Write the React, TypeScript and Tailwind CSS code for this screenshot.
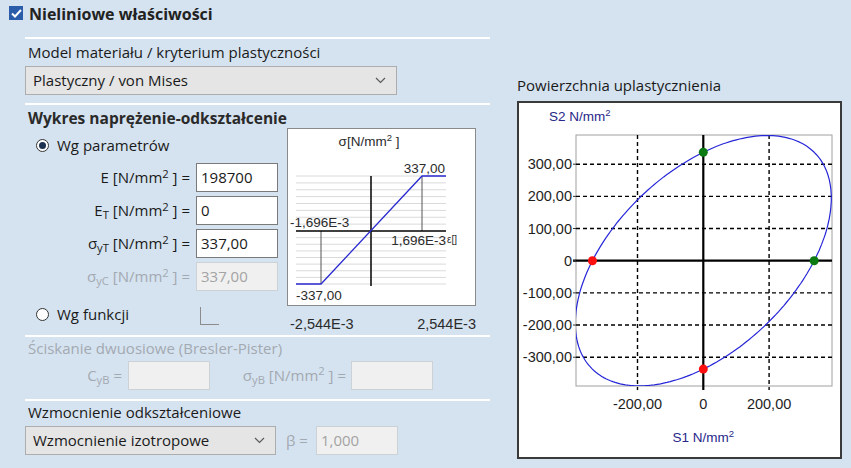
import React from "react";

// von Mises yield surface in the S1/S2 plane
const SY = 337;
const SEMI_A = SY * Math.SQRT2;
const SEMI_B = SY * Math.sqrt(2 / 3);

function Chevron() {
  return (
    <svg width="11" height="7" viewBox="0 0 11 7">
      <path d="M1 1l4.5 4.5L10 1" fill="none" stroke="#5a5a5a" strokeWidth="1.2" />
    </svg>
  );
}

function Field({ value = "", disabled = false }: { value?: string; disabled?: boolean }) {
  return (
    <div
      className={
        disabled
          ? "w-[82px] h-[29px] flex items-center px-[4px] border border-[#cdd2d7] bg-[#f0f0f0] text-[#a3a3a3]"
          : "w-[82px] h-[29px] flex items-center px-[4px] border border-[#7a7a7a] bg-white text-[#1a1a1a]"
      }
    >
      {value}
    </div>
  );
}

function Radio({ checked = false }: { checked?: boolean }) {
  return (
    <span className="w-[13px] h-[13px] rounded-full border border-[#333] bg-white flex items-center justify-center shrink-0">
      {checked && <span className="w-[7px] h-[7px] rounded-full bg-[#1c3050]" />}
    </span>
  );
}

function Separator() {
  return <div className="h-[2px] bg-white" />;
}

function StressChart() {
  const rows: number[] = [];
  for (let k = 0; k < 8; k++) {
    rows.push(47 + (k * 55) / 8);
    rows.push(102 + ((k + 1) * 53) / 8);
  }
  return (
    <svg width="187" height="176" className="block font-['Liberation_Sans',sans-serif]">
      {rows.map((y) => (
        <line key={y} x1="8" x2="158" y1={y} y2={y} stroke="#dadada" />
      ))}
      <line x1="33" x2="33" y1="102" y2="155" stroke="#555" />
      <line x1="134" x2="134" y1="47" y2="102" stroke="#555" />
      <line x1="8" x2="158" y1="102" y2="102" stroke="#000" strokeWidth="1.5" />
      <line x1="83" x2="83" y1="47" y2="157" stroke="#000" strokeWidth="1.5" />
      <polyline points="8,155 33,155 134,47 158,47" fill="none" stroke="#2a2ad0" strokeWidth="1.3" />
      <g fill="#2b2b2b" fontSize="13.5">
        <text x="81" y="17" textAnchor="middle">
          σ[N/mm<tspan dy="-5" fontSize="9.5">2</tspan>
          <tspan dy="5"> ]</tspan>
        </text>
        <text x="157" y="44" textAnchor="end">337,00</text>
        <text x="2" y="98">-1,696E-3</text>
        <text x="158" y="116" textAnchor="end">1,696E-3</text>
        <text x="159" y="114" fontSize="10">ε[]</text>
        <text x="8" y="171">-337,00</text>
      </g>
    </svg>
  );
}

function YieldChart() {
  const cx = 184.3;
  const cy = 157.7;
  const sx = 0.329;
  const sy = 0.3217;
  const px = (v: number) => cx + v * sx;
  const py = (v: number) => cy - v * sy;

  const d =
    Array.from({ length: 241 }, (_, i) => {
      const t = (i / 240) * 2 * Math.PI;
      const s1 = (SEMI_A * Math.cos(t) - SEMI_B * Math.sin(t)) / Math.SQRT2;
      const s2 = (SEMI_A * Math.cos(t) + SEMI_B * Math.sin(t)) / Math.SQRT2;
      return `${i ? "L" : "M"}${px(s1).toFixed(1)},${py(s2).toFixed(1)}`;
    }).join("") + "Z";

  const yTicks = [300, 200, 100, 0, -100, -200, -300];
  const fmt = (v: number) => (v === 0 ? "0" : `${v},00`);

  return (
    <svg width="321" height="354" className="block font-['Liberation_Sans',sans-serif]">
      <defs>
        <clipPath id="plot">
          <rect x="57" y="32" width="256" height="251" />
        </clipPath>
      </defs>
      <rect x="57" y="32" width="256" height="251" fill="#fff" stroke="#a0a0a0" />

      {yTicks
        .filter((v) => v !== 0)
        .map((v) => (
          <line key={v} x1="57" x2="313" y1={py(v)} y2={py(v)} stroke="#000" strokeWidth="1.4" strokeDasharray="4 3" />
        ))}
      {[-200, 200].map((v) => (
        <line key={v} x1={px(v)} x2={px(v)} y1="32" y2="287" stroke="#000" strokeWidth="1.4" strokeDasharray="4 3" />
      ))}
      <line x1="54" x2="313" y1={cy} y2={cy} stroke="#000" strokeWidth="2.2" />
      <line x1={cx} x2={cx} y1="32" y2="287" stroke="#000" strokeWidth="2.2" />

      {yTicks.map((v) => (
        <g key={v}>
          <line x1="54" x2="57" y1={py(v)} y2={py(v)} stroke="#333" />
          <text x="53" y={py(v) + 5} textAnchor="end" fontSize="14.5" fill="#1e1e1e">
            {fmt(v)}
          </text>
        </g>
      ))}
      {[-200, 0, 200].map((v) => (
        <text key={v} x={px(v)} y="306" textAnchor="middle" fontSize="14.5" fill="#1e1e1e">
          {fmt(v)}
        </text>
      ))}

      <path d={d} fill="none" stroke="#2626d8" strokeWidth="1.2" clipPath="url(#plot)" />

      <circle cx={px(-SY)} cy={cy} r="4.5" fill="#ff1010" />
      <circle cx={px(SY)} cy={cy} r="4.5" fill="#0b7a12" />
      <circle cx={cx} cy={py(SY)} r="4.5" fill="#0b7a12" />
      <circle cx={cx} cy={py(-SY)} r="4.5" fill="#ff1010" />

      <g fill="#27278a" fontSize="13.5">
        <text x="30" y="18">
          S2 N/mm<tspan dy="-5" fontSize="9.5">2</tspan>
        </text>
        <text x={cx} y="339" textAnchor="middle">
          S1 N/mm<tspan dy="-5" fontSize="9.5">2</tspan>
        </text>
      </g>
    </svg>
  );
}

export default function App() {
  return (
    <div className="w-[851px] h-[468px] overflow-hidden bg-[#d5e3f0] text-[15px] text-[#1a1a1a] font-['Open_Sans',sans-serif]">
      {/* header */}
      <div className="h-[37px] flex items-start pt-[6px] pl-[9px] gap-[6px]">
        <span className="w-[14px] h-[14px] bg-[#2a5caa] flex items-center justify-center">
          <svg width="11" height="9" viewBox="0 0 11 9">
            <path d="M1 4.5l3 3L10 1" fill="none" stroke="#fff" strokeWidth="2" />
          </svg>
        </span>
        <span className="font-bold leading-[16px] text-[16px] text-[#222]">Nieliniowe właściwości</span>
      </div>

      <div className="flex">
        {/* left column */}
        <div className="ml-[25px] w-[465px] flex flex-col">
          <Separator />
          <div className="mt-[3px] leading-[20px] pl-[3px]">Model materiału / kryterium plastyczności</div>
          <div className="mt-[4px] w-[372px] h-[29px] flex items-center justify-between pl-[7px] pr-[10px] bg-[#e5e5e5] border border-[#adadad]">
            <span>Plastyczny / von Mises</span>
            <Chevron />
          </div>

          <div className="mt-[8px]">
            <Separator />
          </div>
          <div className="mt-[3px] leading-[20px] pl-[3px] font-bold text-[15.5px] text-[#2a2a2a]">
            Wykres naprężenie-odkształcenie
          </div>

          <div className="h-[207px] flex">
            <div className="w-[262px] flex flex-col">
              <div className="mt-[7px] h-[20px] pl-[11px] flex items-center gap-[8px]">
                <Radio checked />
                <span>Wg parametrów</span>
              </div>
              <div className="mt-[8px] flex flex-col gap-[4px]">
                <div className="flex items-center">
                  <span className="w-[165px] text-right">
                    E [N/mm<sup>2</sup> ] =
                  </span>
                  <span className="ml-[6px]">
                    <Field value="198700" />
                  </span>
                </div>
                <div className="flex items-center">
                  <span className="w-[165px] text-right">
                    E<sub>T</sub> [N/mm<sup>2</sup> ] =
                  </span>
                  <span className="ml-[6px]">
                    <Field value="0" />
                  </span>
                </div>
                <div className="flex items-center">
                  <span className="w-[165px] text-right">
                    σ<sub>yT</sub> [N/mm<sup>2</sup> ] =
                  </span>
                  <span className="ml-[6px]">
                    <Field value="337,00" />
                  </span>
                </div>
                <div className="flex items-center text-[#a3a9b0]">
                  <span className="w-[165px] text-right">
                    σ<sub>yC</sub> [N/mm<sup>2</sup> ] =
                  </span>
                  <span className="ml-[6px]">
                    <Field value="337,00" disabled />
                  </span>
                </div>
              </div>
              <div className="mt-[13px] h-[20px] pl-[11px] flex items-center">
                <Radio />
                <span className="ml-[8px] w-[143px]">Wg funkcji</span>
                <span className="self-start mt-[3px] w-[19px] h-[18px] border-l border-b border-[#8c8c8c]" />
              </div>
            </div>

            <div className="w-[189px] flex flex-col">
              <div className="h-[178px] border border-[#8a8a8a] bg-white">
                <StressChart />
              </div>
              <div className="mt-[10px] flex justify-between pl-[3px] leading-[16px] text-[14.5px] text-[#2b2b2b] font-['Liberation_Sans',sans-serif]">
                <span>-2,544E-3</span>
                <span>2,544E-3</span>
              </div>
            </div>
          </div>

          <Separator />
          <div className="mt-[1px] leading-[20px] pl-[3px] text-[#a3a9b0]">Ściskanie dwuosiowe (Bresler-Pister)</div>
          <div className="mt-[2px] h-[30px] flex items-center text-[#a3a9b0]">
            <span className="w-[97px] text-right">
              C<sub>yB</sub> =
            </span>
            <span className="ml-[6px]">
              <Field disabled />
            </span>
            <span className="w-[136px] text-right">
              σ<sub>yB</sub> [N/mm<sup>2</sup> ] =
            </span>
            <span className="ml-[5px]">
              <Field disabled />
            </span>
          </div>

          <div className="mt-[9px]">
            <Separator />
          </div>
          <div className="mt-[1px] leading-[20px] pl-[3px]">Wzmocnienie odkształceniowe</div>
          <div className="mt-[4px] flex items-center">
            <div className="w-[251px] h-[29px] flex items-center justify-between pl-[7px] pr-[10px] bg-[#e5e5e5] border border-[#adadad]">
              <span>Wzmocnienie izotropowe</span>
              <Chevron />
            </div>
            <span className="ml-[10px] w-[24px] text-[#a3a9b0]">β =</span>
            <span className="ml-[6px]">
              <Field value="1,000" disabled />
            </span>
          </div>
        </div>

        {/* right column */}
        <div className="ml-[27px] w-[325px] flex flex-col">
          <div className="mt-[38px] leading-[20px]">Powierzchnia uplastycznienia</div>
          <div className="mt-[6px] h-[358px] border-2 border-[#3a3a3a] bg-white">
            <YieldChart />
          </div>
        </div>
      </div>
    </div>
  );
}
